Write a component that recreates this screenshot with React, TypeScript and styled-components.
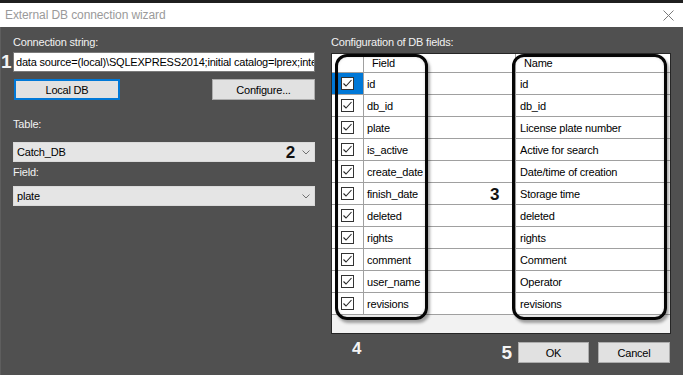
import styled, { createGlobalStyle } from 'styled-components';

const GlobalStyle = createGlobalStyle`
  html, body {
    margin: 0;
    padding: 0;
    background: #505050;
  }
  body {
    font-family: "Liberation Sans", Arial, sans-serif;
  }
  * {
    box-sizing: border-box;
  }
`;

const Window = styled.div`
  width: 683px;
  height: 375px;
  display: flex;
  flex-direction: column;
  overflow: hidden;
`;

const TopStrip = styled.div`
  height: 3px;
  flex-shrink: 0;
  background: #1f1f1f;
`;

const TitleBar = styled.div`
  height: 24px;
  flex-shrink: 0;
  display: flex;
  align-items: center;
  justify-content: space-between;
  padding: 0 9px 0 5px;
  background: #ffffff;
`;

const Title = styled.span`
  font-size: 12px;
  color: #9a9a9a;
  letter-spacing: -0.1px;
`;

const Body = styled.div`
  flex: 1;
  display: flex;
  background: #505050;
  border-left: 1px solid #5e5e5e;
`;

const LeftPane = styled.div`
  width: 302px;
  margin-left: 12px;
  padding-top: 9px;
  display: flex;
  flex-direction: column;
`;

const RightPane = styled.div`
  width: 340px;
  margin-left: 16px;
  padding-top: 9px;
  display: flex;
  flex-direction: column;
`;

const Label = styled.div<{ $gap?: number }>`
  height: 13px;
  line-height: 13px;
  font-size: 11px;
  color: #f2f2f2;
  letter-spacing: -0.2px;
  margin-top: ${({ $gap }) => $gap || 0}px;
`;

const InputRow = styled.div`
  position: relative;
  margin-top: 3px;
`;

const Marker = styled.span<{ $size?: number; $dark?: boolean }>`
  font-weight: 700;
  font-size: ${({ $size }) => $size || 17}px;
  line-height: ${({ $size }) => $size || 17}px;
  color: ${({ $dark }) => ($dark ? '#111111' : '#f4f4f4')};
`;

const InputMarker = styled(Marker)`
  position: absolute;
  left: -12px;
  top: 0;
`;

const TextInput = styled.div`
  height: 20px;
  line-height: 18px;
  padding: 0 2px;
  font-size: 11px;
  letter-spacing: -0.2px;
  color: #000000;
  background: #ffffff;
  border: 1px solid #7a7a7a;
  white-space: nowrap;
  overflow: hidden;
`;

const ButtonRow = styled.div`
  display: flex;
  justify-content: space-between;
  margin-top: 7px;
  padding-left: 1px;
`;

const Button = styled.div<{ $width: number; $focused?: boolean }>`
  width: ${({ $width }) => $width}px;
  height: 21px;
  display: flex;
  align-items: center;
  justify-content: center;
  font-size: 11px;
  letter-spacing: -0.2px;
  color: #000000;
  background: #e1e1e1;
  border: ${({ $focused }) => ($focused ? '2px solid #0078d7' : '1px solid #adadad')};
`;

const Select = styled.div<{ $gap: number }>`
  height: 20px;
  margin-top: ${({ $gap }) => $gap}px;
  display: flex;
  align-items: center;
  padding: 0 4px 0 3px;
  font-size: 11px;
  letter-spacing: -0.2px;
  color: #000000;
  background: #e5e5e5;
  border: 1px solid #dadada;
`;

const SelectValue = styled.span`
  flex: 1;
`;

const SelectMarker = styled(Marker)`
  margin-right: 7px;
  margin-top: 1px;
`;

const GridBox = styled.div`
  position: relative;
  margin-top: 4px;
  height: 281px;
  background: #f2f2f2;
  border: 1px solid #262626;
  overflow: hidden;
`;

const Row = styled.div<{ $header?: boolean }>`
  display: grid;
  grid-template-columns: 32px 152px 1fr;
  height: ${({ $header }) => ($header ? 19 : 22)}px;
  background: #ffffff;
  border-bottom: 1px solid #a0a0a0;
`;

const Cell = styled.div<{ $selected?: boolean; $pad?: number }>`
  display: flex;
  align-items: center;
  padding-left: ${({ $pad }) => $pad ?? 3}px;
  font-size: 11px;
  letter-spacing: -0.2px;
  color: #000000;
  background: ${({ $selected }) => ($selected ? '#0078d7' : 'transparent')};
  border-right: 1px solid #a0a0a0;
  white-space: nowrap;
  overflow: hidden;

  &:last-child {
    border-right: none;
  }
`;

const CheckCell = styled(Cell)`
  justify-content: center;
  padding-left: 0;
`;

const Box = styled.span`
  width: 13px;
  height: 13px;
  display: flex;
  align-items: center;
  justify-content: center;
  background: #ffffff;
  border: 1px solid #333333;
`;

const Outline = styled.div<{ $left: number; $width: number }>`
  position: absolute;
  top: 0;
  left: ${({ $left }) => $left}px;
  width: ${({ $width }) => $width}px;
  height: 266px;
  border: 3px solid #050505;
  border-radius: 12px;
  box-shadow: 2px 3px 3px rgba(0, 0, 0, 0.35), inset 0 0 3px rgba(0, 0, 0, 0.15);
  pointer-events: none;
`;

const GridMarker = styled(Marker)`
  position: absolute;
  left: 158px;
  top: 132px;
`;

const Footer = styled.div`
  display: flex;
  align-items: flex-start;
  margin-top: 8px;
  padding-right: 1px;
`;

const FooterMarker = styled(Marker)`
  margin-left: 21px;
  margin-top: -2px;
  flex: 1;
`;

const OkMarker = styled(Marker)`
  margin-right: 6px;
  margin-top: 1px;
`;

const FooterButtons = styled.div`
  display: flex;
  gap: 9px;
`;

function Chevron() {
  return (
    <svg width="8" height="5" viewBox="0 0 8 5">
      <polyline points="0.5,0.5 4,4 7.5,0.5" fill="none" stroke="#707070" strokeWidth="1" />
    </svg>
  );
}

function CheckBox() {
  return (
    <Box>
      <svg width="11" height="11" viewBox="0 0 11 11">
        <polyline points="1.5,5.5 4,8 9.5,2" fill="none" stroke="#262626" strokeWidth="1.1" />
      </svg>
    </Box>
  );
}

function CloseIcon() {
  return (
    <svg width="11" height="11" viewBox="0 0 11 11">
      <line x1="0.5" y1="0.5" x2="10.5" y2="10.5" stroke="#7a7a7a" strokeWidth="1" />
      <line x1="10.5" y1="0.5" x2="0.5" y2="10.5" stroke="#7a7a7a" strokeWidth="1" />
    </svg>
  );
}

const fields = [
  { field: 'id', name: 'id' },
  { field: 'db_id', name: 'db_id' },
  { field: 'plate', name: 'License plate number' },
  { field: 'is_active', name: 'Active for search' },
  { field: 'create_date', name: 'Date/time of creation' },
  { field: 'finish_date', name: 'Storage time' },
  { field: 'deleted', name: 'deleted' },
  { field: 'rights', name: 'rights' },
  { field: 'comment', name: 'Comment' },
  { field: 'user_name', name: 'Operator' },
  { field: 'revisions', name: 'revisions' },
];

export default function App() {
  return (
    <Window>
      <GlobalStyle />
      <TopStrip />
      <TitleBar>
        <Title>External DB connection wizard</Title>
        <CloseIcon />
      </TitleBar>
      <Body>
        <LeftPane>
          <Label>Connection string:</Label>
          <InputRow>
            <InputMarker $size={19}>1</InputMarker>
            <TextInput>
              data source=(local)\SQLEXPRESS2014;initial catalog=lprex;integrated security=True
            </TextInput>
          </InputRow>
          <ButtonRow>
            <Button $width={106} $focused>Local DB</Button>
            <Button $width={103}>Configure...</Button>
          </ButtonRow>
          <Label $gap={18}>Table:</Label>
          <Select $gap={11}>
            <SelectValue>Catch_DB</SelectValue>
            <SelectMarker $dark>2</SelectMarker>
            <Chevron />
          </Select>
          <Label $gap={4}>Field:</Label>
          <Select $gap={7}>
            <SelectValue>plate</SelectValue>
            <Chevron />
          </Select>
        </LeftPane>
        <RightPane>
          <Label>Configuration of DB fields:</Label>
          <GridBox>
            <Row $header>
              <Cell />
              <Cell $pad={8}>Field</Cell>
              <Cell $pad={8}>Name</Cell>
            </Row>
            {fields.map((f, i) => (
              <Row key={f.field}>
                <CheckCell $selected={i === 0}>
                  <CheckBox />
                </CheckCell>
                <Cell>{f.field}</Cell>
                <Cell $pad={4}>{f.name}</Cell>
              </Row>
            ))}
            <Outline $left={3} $width={93} />
            <Outline $left={180} $width={155} />
            <GridMarker $dark>3</GridMarker>
          </GridBox>
          <Footer>
            <FooterMarker>4</FooterMarker>
            <OkMarker $size={19}>5</OkMarker>
            <FooterButtons>
              <Button $width={71}>OK</Button>
              <Button $width={72}>Cancel</Button>
            </FooterButtons>
          </Footer>
        </RightPane>
      </Body>
    </Window>
  );
}
